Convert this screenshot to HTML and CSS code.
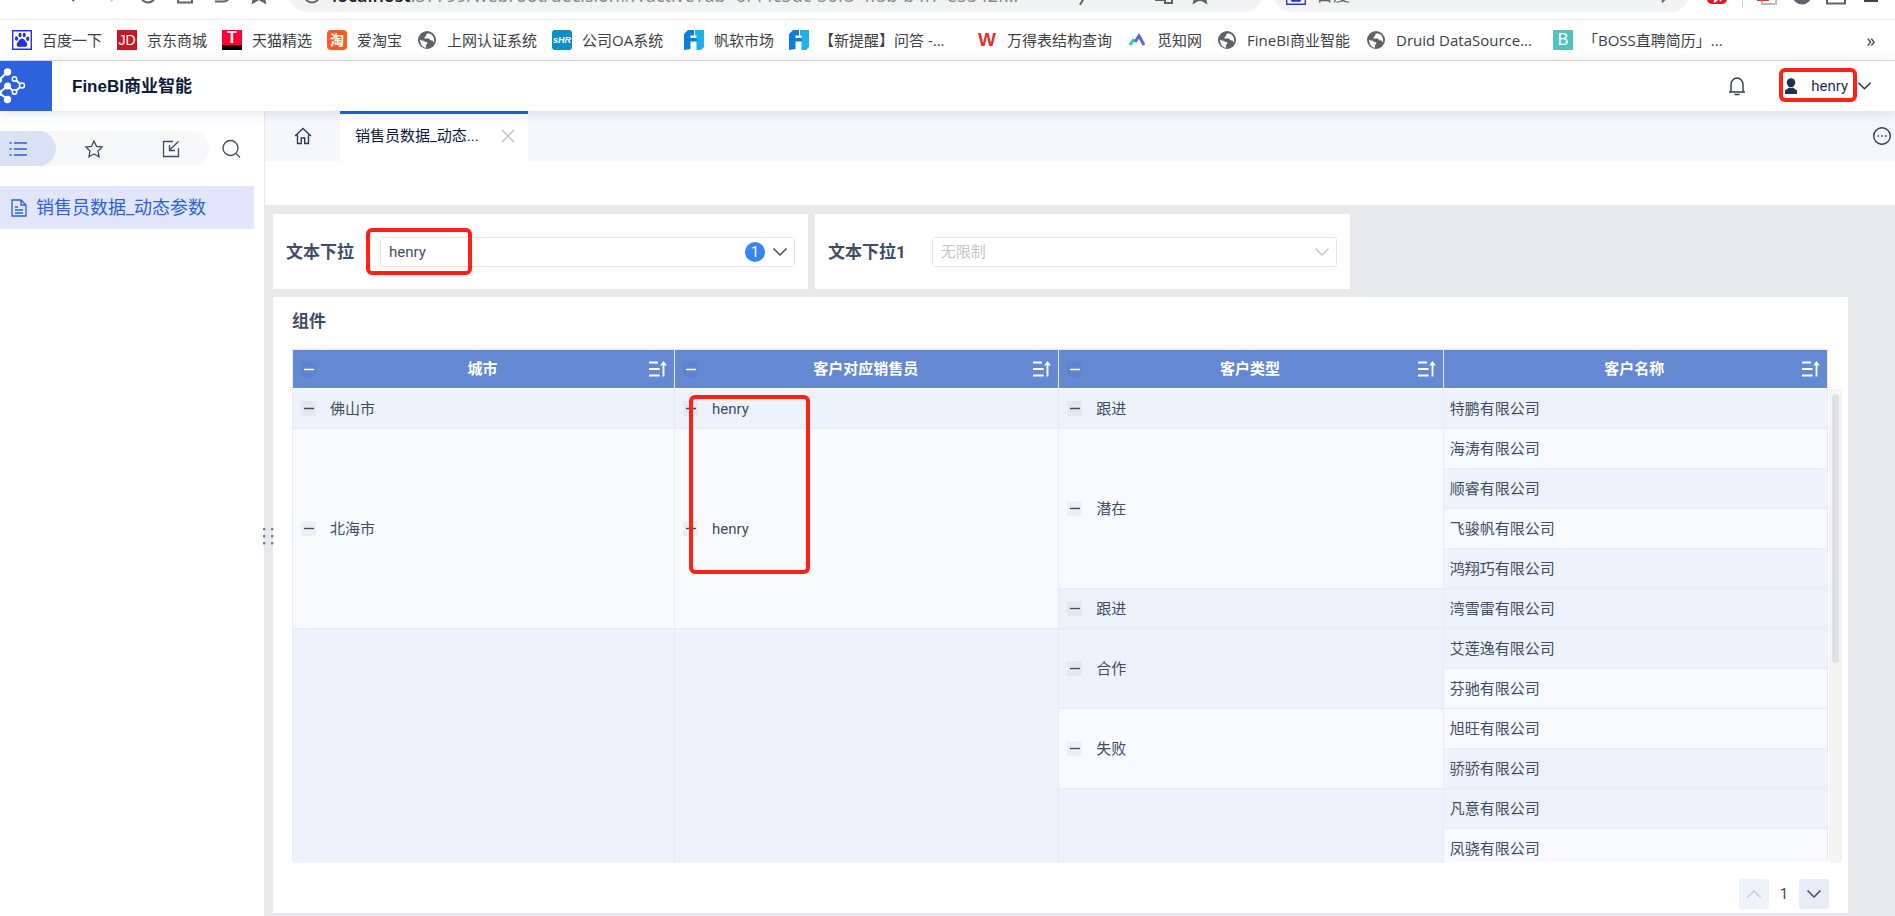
FILE: index.html
```html
<!DOCTYPE html>
<html lang="zh-CN">
<head>
<meta charset="utf-8">
<title>FineBI商业智能</title>
<link rel="stylesheet" href="styles.css">
</head>
<body>
<svg class="defs" aria-hidden="true">
  <symbol id="minus" viewBox="0 0 15 15"><path d="M3 7.500h10" stroke="currentColor" stroke-width="1.300"/></symbol>
  <symbol id="sort" viewBox="0 0 18 16"><path d="M0 1.500h9M0 8h10.500M0 14.500h10.500" stroke="currentColor" stroke-width="2" fill="none"/><path d="M14.500 15.500V3" stroke="currentColor" stroke-width="1.800"/><path d="M14.500 0l3.300 4.500h-6.600z" fill="currentColor"/></symbol>
  <symbol id="down" viewBox="0 0 16 10"><path d="M1.500 1.500L8 8l6.500-6.500" fill="none" stroke="currentColor" stroke-width="1.500"/></symbol>
  <symbol id="globe" viewBox="0 0 20 20"><circle cx="10" cy="10" r="9" fill="#5f6368"/><path d="M3 9.500l1.500 1 2.500.3 1 1.200 2.200.3v1.700l-1.200 1v2.800C5.500 17.300 3 14 3 9.500zM11.500 3.200l-2.500 1.300.3 1.500-1.800 1 .2 1.600h4.300l1.400 1.600 2 .2 1.600 2.300C17.600 9.500 17 4.500 11.500 3.200z" fill="#fff"/></symbol>
  <symbol id="fan" viewBox="0 0 20 20"><path d="M4 0h6v5.500H6.500V8H10v3.500H6.500V19L0 20V4z" fill="#0b7fdb"/><path d="M11 0h9v17l-3 3h-4.500V5.500H11z" fill="#1eb1ea"/><path d="M10 8h3v3.500h-3z" fill="#0b7fdb"/></symbol>
  <symbol id="paw" viewBox="0 0 20 20"><path d="M.7.700h18.600v18.600H.7z" fill="#fff" stroke="#2932e1" stroke-width="1.400"/><g fill="#2932e1"><ellipse cx="4.500" cy="8.500" rx="1.600" ry="2.200"/><ellipse cx="8" cy="5" rx="1.600" ry="2.300"/><ellipse cx="12.300" cy="5" rx="1.600" ry="2.300"/><ellipse cx="15.700" cy="8.800" rx="1.600" ry="2.200"/><path d="M10 8.500c2.300 0 2.800 2.300 4.300 3.800 2 2 .8 5-1.800 4.700-1.700-.3-3.300-.3-5 0-2.700.3-3.800-2.700-1.800-4.700C7.200 10.800 7.700 8.500 10 8.500z"/></g></symbol>
</svg>

<div class="browser-toolbar">
  <div class="toolbar-row">
    <div class="nav-icons">
      <svg viewBox="0 0 20 20"><path d="M17 10H4M10 4l-6 6 6 6"/></svg>
      <svg class="faint" viewBox="0 0 20 20"><path d="M3 10h13M10 4l6 6-6 6"/></svg>
      <svg viewBox="0 0 20 20"><path d="M16.500 6A7.500 7.500 0 1 0 17.500 11M17 2v5h-5"/></svg>
      <svg viewBox="0 0 20 20"><path d="M3 9v8.500h14V9M1 10l9-8 9 8"/></svg>
      <svg viewBox="0 0 20 20"><path d="M3 16.500h9a5 5 0 0 0 0-10H4M8 2L3.500 6.500 8 11"/></svg>
      <svg viewBox="0 0 20 20"><path d="M4 17.500L5.500 11 1 7l6-.5L10 1l3 5.500 6 .5-4.500 4 1.500 6.500-6-3.500z"/></svg>
    </div>
    <div class="address">
      <svg class="info" viewBox="0 0 20 20"><circle cx="10" cy="10" r="7.500"/></svg>
      <span class="url"><b>localhost</b>:37799/webroot/decision#/?activeTab=6f44c5dc-56f8-4f5b-b4f7-e5342f...</span>
      <svg viewBox="0 0 20 20"><path d="M11 2L5 11h8l-5 9"/></svg>
      <svg class="translate" viewBox="0 0 20 20"><path d="M2 3h9v12H2zM10 8h8v10h-7v-3"/></svg>
      <svg viewBox="0 0 20 20"><path d="M4 17.500L5.500 11 1 7l6-.5L10 1l3 5.500 6 .5-4.500 4 1.500 6.500-6-3.500z"/></svg>
    </div>
    <div class="search">
      <svg class="plain" viewBox="0 0 20 20"><use href="#paw"/></svg>
      <input type="text" placeholder="百度" aria-label="搜索">
      <svg viewBox="0 0 20 20"><circle cx="13" cy="8" r="5"/><path d="M10 12l-5 5"/></svg>
    </div>
    <div class="ext-icons">
      <svg class="plain" viewBox="0 0 20 20"><rect width="20" height="19" rx="5" fill="#f01022"/><path d="M7 17l2-2 1 1M13 16l1-1" stroke="#fff"/></svg>
      <i class="divider"></i>
      <svg class="plain" viewBox="0 0 20 20"><path d="M5 5h14v14H5z" fill="#fff" stroke="#bbb"/><path d="M0 2h12v14H0z" fill="#e6392f"/></svg>
      <svg class="plain" viewBox="0 0 20 20"><circle cx="10" cy="10" r="9.500" fill="#5f6368"/></svg>
      <svg viewBox="0 0 20 20"><path d="M1 3h18v15.500H1z"/></svg>
      <svg class="plain" viewBox="0 0 20 20"><path d="M3 12h14v5H3z" fill="#444"/></svg>
    </div>
  </div>
</div>

<nav class="bookmarks">
  <a href="#"><svg><use href="#paw"/></svg>百度一下</a>
  <a href="#"><span class="fav jd">JD</span>京东商城</a>
  <a href="#"><span class="fav tmall">T</span>天猫精选</a>
  <a href="#"><span class="fav tao">淘</span>爱淘宝</a>
  <a href="#"><svg><use href="#globe"/></svg>上网认证系统</a>
  <a href="#"><span class="fav shr">sHR</span>公司OA系统</a>
  <a href="#"><svg><use href="#fan"/></svg>帆软市场</a>
  <a href="#"><svg><use href="#fan"/></svg>【新提醒】问答 -...</a>
  <a href="#"><span class="fav wind">W</span>万得表结构查询</a>
  <a href="#"><svg viewBox="0 0 20 20"><path d="M3 15l4-6" stroke="#2fd08a" stroke-width="3"/><path d="M8 12l4-6 5 9" fill="none" stroke="#5d63e6" stroke-width="3"/></svg>觅知网</a>
  <a href="#"><svg><use href="#globe"/></svg>FineBI商业智能</a>
  <a href="#"><svg><use href="#globe"/></svg>Druid DataSource...</a>
  <a href="#"><span class="fav boss">B</span>「BOSS直聘简历」...</a>
  <button class="more" type="button" aria-label="更多书签">»</button>
</nav>

<header class="app-header">
  <svg class="logo" viewBox="0 0 52 50"><g fill="none" stroke="#fff" stroke-width="2"><path d="M7.500 11L-1 19M-1 32l8.500-7 7 6 7.500-6.500-7.500-6.500M-1 32l8.500 6"/></g><g fill="#fff"><circle cx="7.500" cy="11" r="3.700"/><circle cx="7.500" cy="25" r="3.500"/><circle cx="7.500" cy="38.500" r="3.700"/><circle cx="-1" cy="19" r="3"/><circle cx="-1" cy="32" r="3"/></g><g fill="#2d62dc" stroke="#fff" stroke-width="1.500"><circle cx="14.500" cy="18" r="2.200"/><circle cx="22" cy="24.500" r="2.500"/><circle cx="14.500" cy="31" r="2.200"/></g></svg>
  <h1>FineBI商业智能</h1>
  <button class="bell" type="button" aria-label="消息"><svg viewBox="0 0 18 20"><path d="M1 16h16M3 16V8.500a6 6.500 0 0 1 12 0V16M6.500 18.500h5" fill="none" stroke="#2b3b55" stroke-width="1.400"/></svg></button>
  <button class="user" type="button">
    <svg class="avatar" viewBox="0 0 14 16"><circle cx="7" cy="4.500" r="4.300" fill="#1f3050"/><path d="M4.500 7h5v3L13 12.500V16H1v-3.500L4.500 10z" fill="#1f3050"/><path d="M4 9.500h6" stroke="#fff" stroke-width=".7"/></svg>
    <span>henry</span>
    <svg class="chevron"><use href="#down"/></svg>
    <i class="mark mark-user"></i>
  </button>
</header>

<div class="workspace">
  <aside class="sidebar">
    <div class="side-tools">
      <div class="side-pill">
        <button class="active" type="button" aria-label="目录"><svg viewBox="0 0 20 20"><path d="M6 4h13M6 10h13M6 16h13M1.500 4h2M1.500 10h2M1.500 16h2" stroke-width="1.600"/></svg></button>
        <button type="button" aria-label="收藏"><svg viewBox="0 0 20 20"><path d="M10 2l2.500 5.300 5.700.7-4.200 4 1.100 5.800L10 15l-5.100 2.800L6 12 1.800 8l5.700-.7z"/></svg></button>
        <button type="button" aria-label="导入"><svg viewBox="0 0 20 20"><path d="M12 2.500H2.500v15h15V9M17.500 2.500L8.500 11M8.500 6v5.500H14"/></svg></button>
      </div>
      <button class="side-search" type="button" aria-label="搜索"><svg viewBox="0 0 20 20"><circle cx="9.500" cy="9" r="7.500"/><path d="M15 14.500l4 4"/></svg></button>
    </div>
    <a class="tree-item" href="#"><svg viewBox="0 0 16 18"><path d="M1 1h9l5 5v11H1zM10 1v5h5M4 8h3M4 11h8M4 14h8"/></svg>销售员数据_动态参数</a>
  </aside>

  <main class="main">
    <i class="splitter"></i>
    <div class="tabs">
      <button class="home" type="button" aria-label="首页"><svg viewBox="0 0 18 18"><path d="M1 9l8-7.500L17 9M3.500 7.500v9h3.800V11h3.400v5.500h3.800v-9"/></svg></button>
      <div class="tab"><span>销售员数据_动态...</span><button type="button" aria-label="关闭"><svg viewBox="0 0 14 14"><path d="M1 1l12 12M13 1L1 13"/></svg></button></div>
      <button class="tab-menu" type="button" aria-label="更多"><svg viewBox="0 0 20 20"><circle cx="10" cy="10" r="8.300"/><path d="M5.500 10h1.600M9.200 10h1.600M12.900 10h1.600" stroke-width="1.600"/></svg></button>
    </div>
    <div class="report-bar"></div>
    <div class="dashboard">
      <div class="filters">
        <div class="filter">
          <label for="f1">文本下拉</label>
          <div class="combo">
            <select id="f1"><option>henry</option></select>
            <span class="badge">1</span>
            <svg class="arrow"><use href="#down"/></svg>
          </div>
          <i class="mark mark-filter"></i>
        </div>
        <div class="filter">
          <label for="f2">文本下拉1</label>
          <div class="combo empty">
            <select id="f2"><option>无限制</option></select>
            <svg class="arrow"><use href="#down"/></svg>
          </div>
        </div>
      </div>

      <section class="widget">
        <h2>组件</h2>
        <div class="table-area">
          <div class="table-view">
            <table>
              <colgroup><col class="col-first"><col><col><col></colgroup>
              <thead>
                <tr>
                  <th><div><svg class="fold"><use href="#minus"/></svg><span>城市</span><svg class="sort"><use href="#sort"/></svg></div></th>
                  <th><div><svg class="fold"><use href="#minus"/></svg><span>客户对应销售员</span><svg class="sort"><use href="#sort"/></svg></div></th>
                  <th><div><svg class="fold"><use href="#minus"/></svg><span>客户类型</span><svg class="sort"><use href="#sort"/></svg></div></th>
                  <th><div><i class="fold-gap"></i><span>客户名称</span><svg class="sort"><use href="#sort"/></svg></div></th>
                </tr>
              </thead>
              <tbody>
                <tr><td><div><svg class="fold"><use href="#minus"/></svg>佛山市</div></td><td><div><svg class="fold"><use href="#minus"/></svg>henry</div></td><td><div><svg class="fold"><use href="#minus"/></svg>跟进</div></td><td class="name">特鹏有限公司</td></tr>
                <tr><td class="light" rowspan="5"><div><svg class="fold"><use href="#minus"/></svg>北海市</div></td><td class="light" rowspan="5"><div><svg class="fold"><use href="#minus"/></svg>henry</div></td><td class="light" rowspan="4"><div><svg class="fold"><use href="#minus"/></svg>潜在</div></td><td class="name light">海涛有限公司</td></tr>
                <tr><td class="name">顺睿有限公司</td></tr>
                <tr><td class="name light">飞骏帆有限公司</td></tr>
                <tr><td class="name">鸿翔巧有限公司</td></tr>
                <tr><td><div><svg class="fold"><use href="#minus"/></svg>跟进</div></td><td class="name">湾雪雷有限公司</td></tr>
                <tr><td rowspan="6"></td><td rowspan="6"></td><td rowspan="2"><div><svg class="fold"><use href="#minus"/></svg>合作</div></td><td class="name">艾莲逸有限公司</td></tr>
                <tr><td class="name light">芬驰有限公司</td></tr>
                <tr><td class="light" rowspan="2"><div><svg class="fold"><use href="#minus"/></svg>失败</div></td><td class="name light">旭旺有限公司</td></tr>
                <tr><td class="name">骄骄有限公司</td></tr>
                <tr><td rowspan="2"></td><td class="name">凡意有限公司</td></tr>
                <tr><td class="name light">凤骁有限公司</td></tr>
              </tbody>
            </table>
          </div>
          <div class="scroll-track"><i class="scroll-thumb"></i></div>
          <i class="mark mark-table"></i>
        </div>
        <div class="pager">
          <button class="off" type="button" aria-label="上一页"><svg class="flip"><use href="#down"/></svg></button>
          <span>1</span>
          <button type="button" aria-label="下一页"><svg><use href="#down"/></svg></button>
        </div>
      </section>
    </div>
  </main>
</div>
</body>
</html>
```
FILE: styles.css
```css
* { box-sizing: border-box; }
body {
  margin: 0;
  height: 100vh;
  display: flex;
  flex-direction: column;
  overflow: hidden;
  background: #fff;
  color: #3d4d66;
  font: 15px/20px Roboto, "Noto Sans CJK SC", sans-serif;
}
button, input, select { font: inherit; color: inherit; }
button { border: 0; padding: 0; background: none; display: flex; align-items: center; justify-content: center; }
a { color: inherit; text-decoration: none; }
i { display: block; }
svg { flex: none; }
.defs { position: absolute; width: 0; height: 0; }

/* browser toolbar, scrolled so only its lower edge shows */
.browser-toolbar {
  flex: none;
  height: 20px;
  display: flex;
  align-items: flex-end;
  overflow: hidden;
  border-bottom: 1px solid #ececee;
}
.toolbar-row { flex: 1; height: 42px; padding-bottom: 7px; display: flex; align-items: stretch; }
.toolbar-row svg { width: 20px; height: 20px; fill: none; stroke: #5f6368; stroke-width: 2; }
.toolbar-row svg.plain { stroke: none; }
.toolbar-row svg.faint { stroke: #c4c6c9; }
.nav-icons { width: 289px; padding-left: 64px; display: flex; align-items: center; gap: 17px; }
.address { flex: 1; border-radius: 18px; background: #f1f3f4; padding: 0 52px 0 13px; display: flex; align-items: center; gap: 10px; }
.url { flex: 1; font: 18px/24px "Open Sans", sans-serif; color: #80868b; white-space: nowrap; overflow: hidden; }
.url b { font-weight: 600; color: #202124; }
.translate { margin-left: 52px; margin-right: 6px; }
.search { width: 415px; margin-left: 12px; border-radius: 18px; background: #f1f3f4; padding: 0 12px; display: flex; align-items: center; gap: 8px; }
.search input { flex: 1; min-width: 0; border: 0; background: none; font-size: 17px; }
.search input::placeholder { color: #5f6368; opacity: 1; }
.ext-icons { flex: none; width: 206px; padding: 0 14px 0 18px; display: flex; align-items: center; justify-content: space-between; }
.divider { width: 1px; height: 24px; background: #c8cacc; }

.bookmarks {
  flex: none;
  height: 41px;
  padding: 0 14px 0 12px;
  display: grid;
  grid-template-columns: 105px 105px 105px 90px 135px 132px 105px 188px 150px 90px 149px 187px 1fr auto;
  align-items: center;
  border-bottom: 1px solid #dcdee0;
  color: #3c4043;
  font-family: "Open Sans", "Noto Sans CJK SC", sans-serif;
}
.bookmarks a { display: flex; align-items: center; gap: 10px; white-space: nowrap; }
.bookmarks svg { width: 20px; height: 20px; }
.fav { flex: none; width: 20px; height: 20px; text-align: center; color: #fff; font: bold 14px/20px "Liberation Sans", "Noto Sans CJK SC", sans-serif; }
.jd { background: #c81623; font-weight: 400; }
.tmall { background: #ff0036; border-bottom: 5px solid #000; line-height: 16px; font-size: 16px; }
.tao { background: #ff5a22; border-radius: 4px; }
.shr { background: #0d8ec8; border-radius: 3px; font-size: 9px; font-style: italic; }
.wind { color: #dc3228; font-size: 19px; }
.boss { background: #53c3bb; font-size: 16px; font-weight: 400; }
.more { width: 20px; font-size: 18px; }

.app-header {
  flex: none;
  position: relative;
  z-index: 2;
  height: 50px;
  display: flex;
  align-items: center;
  background: #fff;
  box-shadow: 0 2px 12px rgba(30, 50, 90, .14);
}
.logo { width: 52px; height: 50px; background: #2d62dc; }
h1 { flex: 1; margin: 2px 0 0 20px; color: #0a1a38; font: bold 17px/24px "Liberation Sans", "Noto Sans CJK SC", sans-serif; }
.bell { margin-right: 38px; }
.bell svg { width: 18px; height: 20px; }
.user { position: relative; margin-right: 23px; color: #1f3050; }
.user .avatar { width: 14px; height: 16px; margin-right: 13px; }
.user .chevron { width: 15px; height: 10px; margin-left: 9px; }

/* red annotation frames */
.mark { position: absolute; border: 4px solid #ff2114; border-radius: 6px; pointer-events: none; }
.mark-user { left: -5px; top: -8px; width: 78px; height: 34px; }
.mark-filter { left: 93px; top: 14px; width: 106px; height: 47px; }
.mark-table { left: 397px; top: 46px; width: 121px; height: 179px; }

.workspace { flex: 1; min-height: 0; display: flex; }
.sidebar { width: 264px; padding-top: 20px; background: #fff; }
.side-tools { display: flex; align-items: center; gap: 12px; }
.side-pill { width: 209px; height: 35px; display: flex; border-radius: 0 18px 18px 0; background: #f7f8fa; }
.side-pill button { flex: 1; }
.side-pill .active { flex: none; width: 56px; padding-right: 20px; border-radius: 0 18px 18px 0; background: #d9e1f4; color: #2d5fdb; }
.side-tools svg { width: 20px; height: 20px; fill: none; stroke: currentColor; stroke-width: 1.300; }
.tree-item {
  height: 43px;
  margin: 20px 10px 0 0;
  padding-left: 11px;
  display: flex;
  align-items: center;
  gap: 9px;
  background: #e1e6fa;
  color: #2d5fdb;
  font-size: 18px;
}
.tree-item svg { width: 16px; height: 18px; fill: none; stroke: currentColor; stroke-width: 1.300; }

.main { flex: 1; min-width: 0; position: relative; display: flex; flex-direction: column; border-left: 1px solid #e6e8ec; }
/* two columns of three grip dots */
.splitter {
  position: absolute;
  left: -2px;
  top: 417px;
  width: 11px;
  height: 21px;
  background: radial-gradient(circle at 1px 1px, #75808f 1px, transparent 2px);
  background-size: 8px 7px;
}
.tabs { flex: none; height: 50px; display: flex; align-items: stretch; background: #f5f7fb; }
.tabs svg { fill: none; stroke: #2b3b55; stroke-width: 1.400; }
.home { width: 75px; }
.home svg { width: 18px; height: 18px; }
.tab {
  width: 188px;
  padding: 0 13px 3px 15px;
  display: flex;
  align-items: center;
  justify-content: space-between;
  border-top: 3px solid #2d5fdb;
  background: #fff;
  color: #0a1a38;
}
.tab svg { width: 14px; height: 14px; stroke: #c0c4cb; }
.tab-menu { margin: 0 3px 0 auto; }
.tab-menu svg { width: 20px; height: 20px; }
.report-bar { flex: none; height: 44px; }

.dashboard { flex: 1; min-height: 0; padding: 9px 47px 3px 8px; display: flex; flex-direction: column; gap: 8px; background: #e8e9ed; }
.filters { display: flex; gap: 7px; }
.filter { position: relative; flex: 0 1 535px; height: 75px; padding: 0 13px; display: flex; align-items: center; background: #fff; }
.filter label { flex: none; font-weight: 700; font-size: 17px; white-space: nowrap; }
.combo { position: relative; flex: 1; height: 30px; margin-left: 26px; }
.combo select { width: 100%; height: 30px; padding: 0 8px; appearance: none; border: 1px solid #e4e6ec; border-radius: 3px; background: #fff; }
.combo .arrow { position: absolute; right: 7px; top: 10px; width: 16px; height: 10px; }
.empty, .empty select { color: #c3c6cc; }
.badge { position: absolute; right: 30px; top: 5px; width: 20px; height: 20px; border-radius: 50%; background: #3685f2; color: #fff; text-align: center; }

.widget { flex: 1; min-height: 0; padding: 12px 6px 4px 19px; display: flex; flex-direction: column; background: #fff; }
h2 { margin: 0 0 16px; font-size: 17px; line-height: 24px; font-weight: 700; }
.table-area { position: relative; flex: 1; min-height: 0; display: flex; gap: 1px; }
.table-view { flex: 1; overflow: hidden; border-left: 1px solid #e6ebf7; border-top: 1px solid #e6ebf7; border-radius: 0 0 4px 4px; }
table { width: 100%; table-layout: fixed; border-collapse: separate; border-spacing: 0; }
.col-first { width: 382px; }
th { height: 39px; padding: 0; background: #6488d2; color: #fff; border-right: 1px solid #e6ebf7; border-bottom: 1px solid #fff; }
th div { display: flex; align-items: center; padding: 0 7px 0 8px; }
th span { flex: 1; text-align: center; }
.fold { width: 15px; height: 15px; background: rgba(90, 100, 110, .07); }
th .fold { background: rgba(50, 110, 190, .12); }
.fold-gap { width: 15px; }
.sort { width: 18px; height: 16px; }
td { height: 40px; padding: 0; background: #eef3fb; border-right: 1px solid #e6ebf7; border-bottom: 1px solid #e6ebf7; }
td div { display: flex; align-items: center; gap: 14px; padding-left: 8px; }
.name { padding-left: 6px; }
.light { background: #f8fafe; }
.scroll-track { width: 13px; margin-top: 40px; padding: 5px 3px; border-radius: 4px; background: #f4f4f5; }
.scroll-thumb { width: 7px; height: 58%; border-radius: 4px; background: #dfe1e5; }

.pager { display: flex; justify-content: flex-end; align-items: center; margin: 16px 13px 0 0; }
.pager button { width: 30px; height: 30px; border-radius: 3px; background: #e7ecf8; }
.pager .off { background: #eff3fb; color: #c8cbd0; }
.pager span { width: 30px; text-align: center; }
.pager svg { width: 16px; height: 10px; }
.flip { transform: rotate(180deg); }
```
